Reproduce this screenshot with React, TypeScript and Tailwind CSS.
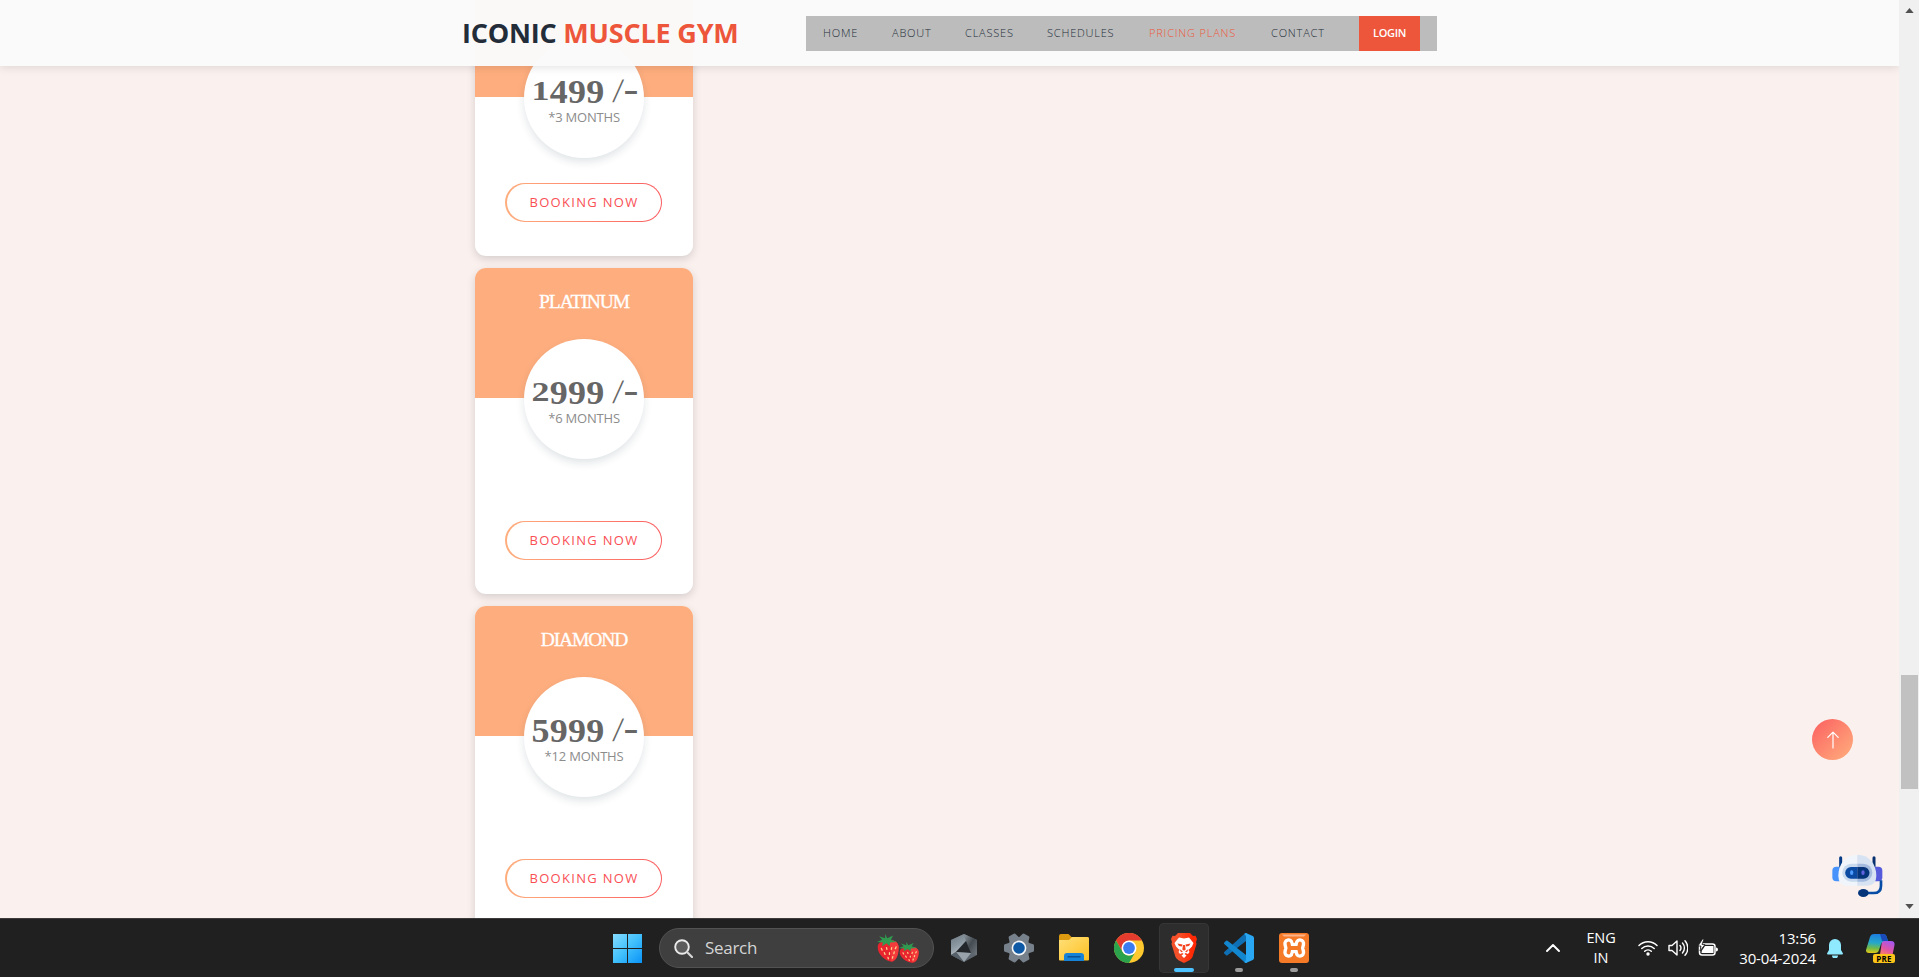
import React from "react";

type Plan = { name?: string; price: string; period: string; compact?: boolean };

const plans: Plan[] = [
  { price: "1499", period: "*3 MONTHS", compact: true },
  { name: "PLATINUM", price: "2999", period: "*6 MONTHS" },
  { name: "DIAMOND", price: "5999", period: "*12 MONTHS" },
];

const links = [
  { label: "HOME", cls: "w-[69px]" },
  { label: "ABOUT", cls: "w-[73px]" },
  { label: "CLASSES", cls: "w-[82px]" },
  { label: "SCHEDULES", cls: "w-[102px]" },
  { label: "PRICING PLANS", cls: "w-[122px] text-[#ed563b]" },
  { label: "CONTACT", cls: "w-[88px]" },
];

function Header() {
  return (
    <header className="absolute inset-x-0 top-0 z-10 flex h-[66px] bg-[#fafafa]/98 pl-[462px] shadow-[0_0_10px_rgba(0,0,0,0.15)]">
      <div className="w-[344px] whitespace-nowrap text-[27px] font-bold leading-[65px] tracking-[-0.200px] text-[#232d39]">
        ICONIC <span className="text-[#ed563b]">MUSCLE GYM</span>
      </div>
      <nav className="mt-4 flex h-[35px] w-[631px] bg-[#bcbcbc] pl-[17px] text-[11px] font-[350] leading-[33px] tracking-[0.8px] text-[#232d39]">
        {links.map((l) => (
          <a key={l.label} className={`whitespace-nowrap ${l.cls}`}>
            {l.label}
          </a>
        ))}
        <a className="w-[61px] bg-[#ed563b] text-center font-semibold tracking-[-0.3px] text-white">LOGIN</a>
      </nav>
    </header>
  );
}

/* Old-style figures: 1 and 2 sit at x-height, the others hang below the baseline. */
function Digit({ d }: { d: string }) {
  const low = d === "1" || d === "2";
  return (
    <span
      className={
        low
          ? "inline-block origin-[50%_80%] translate-y-[-1px] scale-y-[0.78]"
          : "inline-block translate-y-[2px] scale-y-[0.96]"
      }
    >
      {d}
    </span>
  );
}

function Card({ plan }: { plan: Plan }) {
  return (
    <article
      className={`flex w-[218px] shrink-0 flex-col items-center rounded-[11px] bg-white shadow-[0_3px_8px_rgba(0,0,0,0.15)] ${
        plan.compact ? "h-[289px]" : "h-[326px]"
      }`}
    >
      <div className="flex h-[130px] w-full shrink-0 flex-col items-center rounded-t-[11px] bg-[#feae7e]">
        <h3 className="mt-[22px] h-[49px] shrink-0 font-['Liberation_Serif',serif] text-[19.5px] leading-[23px] tracking-[-1.1px] text-white [-webkit-text-stroke:0.3px_white]">
          {plan.name}
        </h3>
        <div className="flex h-[120px] w-[120px] shrink-0 flex-col items-center rounded-full bg-white shadow-[0_4px_8px_rgba(10,40,60,0.12)]">
          <div className="mt-[32px] h-[38px] whitespace-nowrap font-['Liberation_Serif',serif] text-[36px] font-bold leading-[38px] text-[#666]">
            <span className="tracking-[0.300px]">
              {plan.price.split("").map((d, i) => (
                <Digit key={i} d={d} />
              ))}
            </span>
            <span className="inline-block translate-y-[1px] skew-x-[-6deg] whitespace-pre text-[34px] font-normal leading-[38px]"> /</span>
            <span className="ml-[2px] inline-block scale-x-[1.25]">-</span>
          </div>
          <div className="text-[13px] leading-[18px] tracking-[-0.2px] text-[#8c8c8c]">{plan.period}</div>
        </div>
      </div>
      <button
        className={`mr-[2px] flex h-[39px] w-[157px] shrink-0 items-center justify-center rounded-full bg-linear-to-r from-[#feae7e] to-[#fa5c60] p-[1px] pl-[2px] ${
          plan.compact ? "mt-[86px]" : "mt-[123px]"
        }`}
      >
        <span className="flex h-full w-full items-center justify-center rounded-full bg-white pl-[1px] text-[13px] font-medium tracking-[1.3px] text-[#f94f55]">
          BOOKING NOW
        </span>
      </button>
    </article>
  );
}

function Robot() {
  return (
    <svg viewBox="155 583 153 132" className="h-[44px] w-[51px]">
      <path d="M181 594v28" stroke="#053b86" strokeWidth="9" strokeLinecap="round" />
      <path d="M281 594v28" stroke="#062f70" strokeWidth="9" strokeLinecap="round" />
      <path d="M178 621h-10a12 12 0 0 0-12 12v20a12 12 0 0 0 12 12h10z" fill="#4793fb" />
      <path d="M284 621h10a12 12 0 0 1 12 12v20a12 12 0 0 1-12 12h-10z" fill="#565bdc" />
      <path d="M302 662v16q0 22-22 22h-28" fill="none" stroke="#084da5" strokeWidth="8" />
      <ellipse cx="249" cy="700" rx="16" ry="12" fill="#04357a" />
      <path d="M231 585c-34 0-57 26-57 64q0 29 28 29h29z" fill="#f0f5fb" />
      <path d="M231 585c34 0 57 26 57 64q0 29-28 29h-29z" fill="#d7e3f2" />
      <path d="M231 612h-18a27 27 0 0 0 0 54h18z" fill="#c9daef" />
      <path d="M231 612h18a27 27 0 0 1 0 54h-18z" fill="#a4bbdf" />
      <path d="M231 622h-19a17 17 0 0 0 0 35h19z" fill="#0a4aa3" />
      <path d="M231 622h19a17 17 0 0 1 0 35h-19z" fill="#05347a" />
      <ellipse cx="214" cy="639" rx="5" ry="7" fill="#4d9bff" />
      <ellipse cx="248" cy="639" rx="5" ry="7" fill="#6062df" />
    </svg>
  );
}

function Scrollbar() {
  return (
    <div className="flex w-[20px] shrink-0 flex-col items-center bg-[#f0f0f0]">
      <svg viewBox="0 0 10 6" className="mt-[8px] h-[5px] w-[9px]">
        <path d="M0 6 5 0l5 6z" fill="#505050" />
      </svg>
      <div className="mt-[662px] ml-[1px] h-[114px] w-[17px] bg-[#c1c1c1]" />
      <svg viewBox="0 0 10 6" className="mt-[115px] h-[5px] w-[9px]">
        <path d="M0 0h10L5 6z" fill="#505050" />
      </svg>
    </div>
  );
}

function Strawberry({ cls }: { cls: string }) {
  return (
    <svg viewBox="0 0 60 78" preserveAspectRatio="none" className={cls}>
      <path d="M2 34c-2 22 22 44 40 43 14-4 18-26 17-43-4-18-24-18-30-12C18 18 4 22 2 34z" fill="#e8252f" />
      <path d="M30 22c8 8 10 30 8 54 16-2 21-24 21-42-4-18-23-18-29-12z" fill="#f43b3c" />
      <path d="M22 0l6 12L44 4l-6 12 16 6-18 2-2 10-8-8-12 8 2-10-16-2 14-6-8-10 16 6z" fill="#2f9a50" />
      <path
        d="M12 40l2 5M26 38l1 5M40 38l-1 5M52 36l-2 5M20 52l2 5M34 52v5M47 50l-1 5M30 65l1 4M43 63l-1 4"
        stroke="#ffd08a"
        strokeWidth="3.500"
        strokeLinecap="round"
      />
    </svg>
  );
}

function HexIcon() {
  return (
    <svg viewBox="0 0 26 28" className="h-[28px] w-[26px]">
      <defs>
        <linearGradient id="hexl" x1="0" y1="0" x2="0.4" y2="1">
          <stop offset="0" stopColor="#6d7982" />
          <stop offset="0.6" stopColor="#8d99a2" />
          <stop offset="1" stopColor="#b3bcc3" />
        </linearGradient>
        <linearGradient id="hexr" x1="0" y1="0" x2="1" y2="1">
          <stop offset="0" stopColor="#8d979f" />
          <stop offset="0.5" stopColor="#444b51" />
          <stop offset="1" stopColor="#70797f" />
        </linearGradient>
      </defs>
      <path d="M13 0 26 6v15l-13 7-13-7V6z" fill="#5d666e" />
      <path d="M13 0 26 6v15l-6-2L15 7z" fill="url(#hexr)" />
      <path d="M13 0 0 6v15l5-3L15 7z" fill="url(#hexl)" />
      <path d="M15 7 5 18l15 1z" fill="#23272c" />
      <path d="M5 18l15 1-7 9z" fill="#98a2aa" />
      <path d="M5 18l8 10-13-7z" fill="#56606a" />
    </svg>
  );
}

function GearIcon() {
  return (
    <svg viewBox="-15 -15 30 30" className="h-[30px] w-[30px]">
      <g fill="#77818b">
        <circle r="11" />
        {[30, 90, 150, 210, 270, 330].map((a) => (
          <path key={a} d="M-5.800-8-3.800-14.200q.3-.8 1.200-.8h5.200q.9 0 1.200.8L5.800-8z" transform={`rotate(${a})`} />
        ))}
      </g>
      <circle r="7.4" fill="#f4f6f8" />
      <circle r="5.8" fill="#0d59a5" />
    </svg>
  );
}

function FolderIcon() {
  return (
    <svg viewBox="0 0 30 27" className="h-[27px] w-[30px]">
      <defs>
        <linearGradient id="fold" x1="0" y1="0" x2="1" y2="1">
          <stop offset="0" stopColor="#ffe07a" />
          <stop offset="1" stopColor="#fdc021" />
        </linearGradient>
      </defs>
      <path d="M0 2q0-2 2-2h7.500l3 3H28q2 0 2 2v6H0z" fill="#dc9a10" />
      <path d="M0 6h10l3-3h15.500q1.500 0 1.500 1.500V25.500q0 1-1 1H1q-1 0-1-1z" fill="url(#fold)" />
      <path d="M5 27v-5q0-3 3-3h14q3 0 3 3v5z" fill="#1683d8" />
      <path d="M8.500 22.800h13" stroke="#0a4f92" strokeWidth="1.400" />
    </svg>
  );
}

function ChromeIcon() {
  return (
    <svg viewBox="-15 -15 30 30" className="h-[30px] w-[30px]">
      <circle r="15" fill="#fdc92f" />
      <path d="M-13-7.500A15 15 0 0 1 13-7.500H0L-6.500 3.700z" fill="#e33b2e" />
      <path d="M-13-7.500A15 15 0 0 0 0 15L6.500 3.700A7.500 7.500 0 0 1-6.500 3.700z" fill="#2ba24c" />
      <circle r="7.500" fill="#fff" />
      <circle r="5.900" fill="#3b7df0" />
    </svg>
  );
}

function BraveIcon() {
  return (
    <svg viewBox="0 0 26 30" className="h-[30px] w-[26px]">
      <defs>
        <linearGradient id="brv" x1="0" x2="1">
          <stop offset="0.3" stopColor="#f4512a" />
          <stop offset="0.8" stopColor="#ff2a05" />
        </linearGradient>
      </defs>
      <path d="M7 0h12l3 3 2.500-.3L26 6l-1 3 .5 2-4 13q-1 2-3 3.300L13 30l-5.500-2.700q-2-1.300-3-3.300L.500 11 1 9 0 6l1.500-3.300L4 3z" fill="url(#brv)" />
      <path d="M8 4.500 13 5.500l5-1 4.500 5.500-1.500 3.500-3.500 3.500 1 2-1.500 2-2.500-1-1 1 2 1.500L13 25l-2.500-2.500 2-1.500-1-1-2.500 1-1.500-2 1-2L5 13.500 3.500 10z" fill="#fff" />
      <path d="M6.500 10.500l5 1-.5 2-3-.5zM19.500 10.500l-5 1 .5 2 3-.5zM12 12h2l.7 4.500-1.700 1.300-1.700-1.300zM8.500 16l3.500 2.500-2 .8zM17.500 16 14 18.500l2 .8z" fill="#f4451f" />
    </svg>
  );
}

function CodeIcon() {
  return (
    <svg viewBox="0 0 30 30" className="h-[30px] w-[30px]">
      <path d="M22 8 3.500 22.300q-.8.500-1.400 0L.3 20.600q-.7-.8 0-1.500L20.500.700 23 0z" fill="#0f6fb5" />
      <path d="M22 22 3.500 7.700q-.8-.5-1.400 0L.3 9.400q-.7.800 0 1.500L20.500 29.300 23 30z" fill="#1287d0" />
      <path d="M22 0l6.700 3q1.300.6 1.300 2v20q0 1.400-1.300 2L22 30q-1 0-1.600-.8L22 27z" fill="#2aa7f3" />
      <path d="M22 0q-1 0-1.700.8L22 3z" fill="#2aa7f3" />
    </svg>
  );
}

function XamppIcon() {
  return (
    <svg viewBox="0 0 30 30" className="h-[30px] w-[30px]">
      <rect width="30" height="30" rx="3" fill="#f47a28" />
      <path d="M3 1.500h24l-2 2H5z" fill="#fbb487" />
      <g fill="none" strokeLinecap="round" strokeLinejoin="round">
        <path d="M9.500 10.500 10.500 15l-1 4.500M21 10.500 20 15l1 4.500M10.500 15H20" stroke="#fff" strokeWidth="10.500" />
        <path d="M9.500 10.500 10.500 15l-1 4.500M21 10.500 20 15l1 4.500M10.500 15H20" stroke="#f47a28" strokeWidth="3.800" />
      </g>
      <path d="M15.200 4v5.500M15.200 20.500V26" stroke="#f47a28" strokeWidth="1.500" />
    </svg>
  );
}

function CopilotIcon() {
  return (
    <div className="relative h-[29px] w-[29px]">
      <svg viewBox="0 0 29 29" className="h-[29px] w-[29px]">
        <defs>
          <linearGradient id="cpa" x1="0.3" y1="0" x2="0.2" y2="1">
            <stop offset="0" stopColor="#1c7fe0" />
            <stop offset="0.45" stopColor="#25a8c9" />
            <stop offset="0.75" stopColor="#75bb45" />
            <stop offset="1" stopColor="#e6c817" />
          </linearGradient>
          <linearGradient id="cpb" x1="0.7" y1="0" x2="0.3" y2="1">
            <stop offset="0" stopColor="#a657ef" />
            <stop offset="0.5" stopColor="#e155a5" />
            <stop offset="1" stopColor="#ff9150" />
          </linearGradient>
        </defs>
        <path d="M16 7h9q4 0 3.500 4l-2 10q-.5 3-4 3h-9z" fill="url(#cpb)" />
        <path d="M8 0h9q3 0 3.700 3L22 7h-3q-3 0-4 3l-2 6q-.7 3-4 3H3q-4 0-2.700-4L4 3q1-3 4-3z" fill="url(#cpa)" />
        <path d="M14 0h3q3 0 3.700 3L22 7h-6z" fill="#1a49b8" />
      </svg>
      <span className="absolute bottom-0 right-0 flex h-[9px] w-[22px] items-center justify-center rounded-[2px] bg-[#fcc419] text-[8px] font-bold leading-[9px] tracking-[0.3px] text-black">
        PRE
      </span>
    </div>
  );
}

function Cell({ children, dot, active }: { children: React.ReactNode; dot?: boolean; active?: boolean }) {
  return (
    <div className="flex h-[59px] w-[55px] flex-col items-center pt-[4px]">
      <div
        className={`relative flex h-[50px] w-[50px] items-center justify-center rounded-[5px] ${
          active ? "bg-[#2d2d2d] shadow-[inset_0_0_0_1px_#363636]" : ""
        }`}
      >
        {children}
        {active && <i className="absolute bottom-[1px] h-[4px] w-[20px] rounded-full bg-[#4cc2ff]" />}
        {dot && <i className="absolute bottom-[1px] h-[4px] w-[8px] rounded-full bg-[#9a9a9a]" />}
      </div>
    </div>
  );
}

function Taskbar() {
  return (
    <footer className="flex h-[59px] w-full items-center border-t border-[#3c3a3a] bg-[#202020] pl-[613px] text-white">
      <svg viewBox="0 0 29 29" className="h-[29px] w-[29px] shrink-0">
        <defs>
          <linearGradient id="win" x1="0" y1="0" x2="1" y2="1">
            <stop offset="0" stopColor="#86dcff" />
            <stop offset="0.5" stopColor="#41c0fb" />
            <stop offset="1" stopColor="#0a93f8" />
          </linearGradient>
        </defs>
        <path d="M0 0h14v14H0zM15 0h14v14H15zM0 15h14v14H0zM15 15h14v14H15z" fill="url(#win)" />
      </svg>
      <div className="ml-[17px] flex h-[40px] w-[275px] shrink-0 items-center rounded-full border border-[#525252] bg-[#3f3f3f] pl-[14px]">
        <svg viewBox="0 0 19 19" className="h-[19px] w-[19px]">
          <circle cx="8" cy="8" r="6.800" fill="#5c5c5c" stroke="#ececec" strokeWidth="1.900" />
          <path d="M13 13l5 5" stroke="#d6d6d6" strokeWidth="2.200" strokeLinecap="round" />
        </svg>
        <span className="ml-[12px] w-[172px] text-[17px] leading-[24px] tracking-[-0.3px] text-[#d4d4d4]">Search</span>
        <Strawberry cls="h-[28px] w-[22px]" />
        <Strawberry cls="mt-[8px] h-[21px] w-[20px]" />
      </div>
      <div className="ml-[2px] flex w-[385px] shrink-0">
        <Cell><HexIcon /></Cell>
        <Cell><GearIcon /></Cell>
        <Cell><FolderIcon /></Cell>
        <Cell><ChromeIcon /></Cell>
        <Cell active><BraveIcon /></Cell>
        <Cell dot><CodeIcon /></Cell>
        <Cell dot><XamppIcon /></Cell>
      </div>
      <div className="ml-[225px] flex items-center">
        <svg viewBox="0 0 14 8" className="h-[8px] w-[14px]">
          <path d="M1 7l6-6 6 6" fill="none" stroke="#fff" strokeWidth="1.900" strokeLinecap="round" strokeLinejoin="round" />
        </svg>
        <div className="ml-[21px] w-[40px] text-center text-[14.500px] leading-[20px] tracking-[-0.100px]">
          ENG
          <br />
          IN
        </div>
        <svg viewBox="0 0 20 16" className="ml-[17px] h-[16px] w-[20px]">
          <g fill="none" stroke="#fff" strokeWidth="1.500" strokeLinecap="round">
            <path d="M1 5.500a12.700 12.700 0 0 1 18 0M3.800 8.500a8.800 8.800 0 0 1 12.400 0M6.700 11.300a4.700 4.700 0 0 1 6.600 0" />
          </g>
          <circle cx="10" cy="14" r="1.700" fill="#fff" />
        </svg>
        <svg viewBox="0 0 20 18" className="ml-[10px] h-[18px] w-[20px]">
          <g fill="none" stroke="#fff" strokeWidth="1.400" strokeLinecap="round" strokeLinejoin="round">
            <path d="M1 6.500h3L9 2v14l-5-4.500H1zM12 6.500a4 4 0 0 1 0 5M14.500 4a7.500 7.500 0 0 1 0 10M17 1.700a10.800 10.800 0 0 1 0 14.600" />
          </g>
        </svg>
        <svg viewBox="0 0 20 18" className="ml-[10px] h-[18px] w-[20px]">
          <rect x="1.500" y="5" width="15.500" height="11" rx="2.500" fill="none" stroke="#fff" strokeWidth="1.500" />
          <path d="M18 8.500q2 0 2 2t-2 2z" fill="#fff" />
          <path d="M7 7h8.500v7H3.500q0-3 1.500-4z" fill="#fff" />
          <path d="M4.500 0 0 7h3l-1 5L7 5.500H4L6 0z" fill="#fff" stroke="#202020" strokeWidth=".8" />
        </svg>
        <div className="w-[98px] whitespace-nowrap text-right text-[15px] leading-[20px] tracking-[-0.150px]">
          13:56
          <br />
          30-04-2024
        </div>
        <svg viewBox="0 0 16 19" className="ml-[11px] h-[19px] w-[16px]">
          <path d="M8 0a6 6 0 0 1 6 6v5l2 3.500q0 1-1 1H1q-1 0-1-1L2 11V6a6 6 0 0 1 6-6zM5 16.500h6a3 3 0 0 1-6 0z" fill="#8fe9ff" />
        </svg>
        <div className="ml-[23px]"><CopilotIcon /></div>
      </div>
    </footer>
  );
}

export default function App() {
  return (
    <div className="flex h-[977px] w-[1919px] flex-col overflow-hidden font-['Open_Sans','Noto_Sans',sans-serif]">
      <div className="flex h-[918px] overflow-hidden">
        <main className="relative h-[918px] flex-1 overflow-hidden bg-[#faf1ef]">
          <Header />
          <section className="-mt-[33px] ml-[475px] flex w-[218px] flex-col gap-3">
            {plans.map((p) => (
              <Card key={p.price} plan={p} />
            ))}
          </section>
          <button className="absolute left-[1812px] top-[719px] flex h-[41px] w-[41px] items-center justify-center rounded-full bg-linear-to-br from-[#fa5c60] to-[#feae7e]">
            <svg viewBox="0 0 12 18" className="h-[18px] w-[12px]">
              <path d="M6 17V1.200M.8 6.400 6 1.200l5.200 5.200" fill="none" stroke="#fff" strokeWidth="1.200" strokeLinecap="round" strokeLinejoin="round" />
            </svg>
          </button>
          <div className="absolute left-[1832px] top-[854px]">
            <Robot />
          </div>
        </main>
        <Scrollbar />
      </div>
      <Taskbar />
    </div>
  );
}
